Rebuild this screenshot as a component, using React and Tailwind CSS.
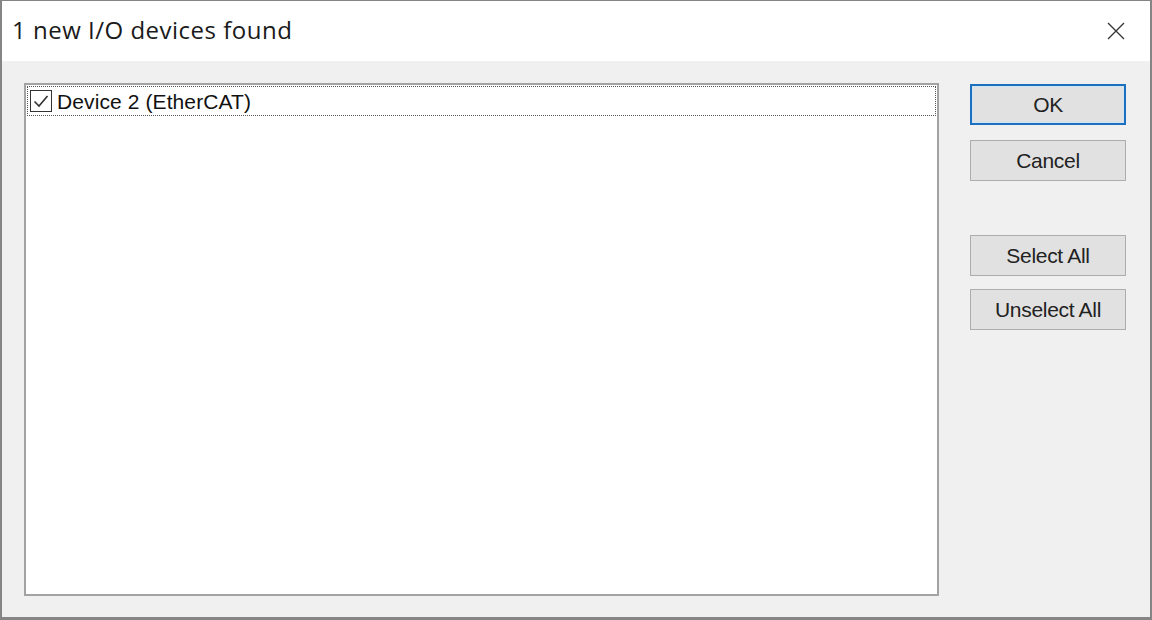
import React, { useState } from 'react';

const buttonBase =
    'h-[41px] w-full flex items-center justify-center bg-[#e1e1e1] text-[21px] text-[#222] font-["Liberation_Sans",Arial,sans-serif] tracking-[-0.3px]';

function DialogButton({ children, isDefault }) {
    return (
        <button
            type="button"
            className={
                isDefault
                    ? `${buttonBase} border-2 border-[#1f6fbf] shadow-[inset_0_0_0_1px_#cde6f7]`
                    : `${buttonBase} border border-[#adadad]`
            }
        >
            {children}
        </button>
    );
}

export default function App() {
    const [checked, setChecked] = useState(true);

    return (
        <div className="w-[1152px] h-[620px] flex flex-col bg-[#f0f0f0] border-t border-x-2 border-b-[3px] border-[#858585] overflow-hidden">
            {/* TITLE BAR */}
            <div className="h-[60px] shrink-0 bg-white flex items-center justify-between pl-[10px] pr-[22px]">
                <h1 className="text-[24px] text-[#1a1a1a] font-['Open_Sans',sans-serif] tracking-[0.5px] leading-none pb-[2px]">
                    1 new I/O devices found
                </h1>
                <button type="button" className="w-[24px] h-[24px] flex items-center justify-center text-[#333]">
                    <svg width="18" height="18" viewBox="0 0 18 18" fill="none" stroke="currentColor" strokeWidth="1.3">
                        <path d="M1 1L17 17M17 1L1 17" />
                    </svg>
                </button>
            </div>

            {/* BODY */}
            <div className="flex-1 flex gap-[31px] pl-[22px] pr-[23px] pt-[22px] pb-[20px]">
                {/* LIST */}
                <div className="w-[915px] h-[513px] bg-white border-2 border-[#a3a3a3] pt-[1px] pl-[1px] pr-[1px]">
                    <div
                        className="h-[30px] flex items-center border border-dotted border-[#555] pl-[2px]"
                        onClick={() => setChecked(!checked)}
                    >
                        <div className="w-[22px] h-[22px] border border-[#333] bg-white flex items-center justify-center shrink-0">
                            {checked && (
                                <svg width="18" height="18" viewBox="0 0 18 18" fill="none" stroke="#333" strokeWidth="1.6">
                                    <path d="M2.5 9.5L7 14L15.5 4" />
                                </svg>
                            )}
                        </div>
                        <span className="ml-[5px] text-[21px] leading-none text-[#111] font-['Liberation_Sans',Arial,sans-serif] tracking-[0.1px]">
                            Device 2 (EtherCAT)
                        </span>
                    </div>
                </div>

                {/* BUTTONS */}
                <div className="w-[156px] flex flex-col pt-[1px]">
                    <DialogButton isDefault>OK</DialogButton>
                    <div className="mt-[15px]">
                        <DialogButton>Cancel</DialogButton>
                    </div>
                    <div className="mt-[54px]">
                        <DialogButton>Select All</DialogButton>
                    </div>
                    <div className="mt-[13px]">
                        <DialogButton>Unselect All</DialogButton>
                    </div>
                </div>
            </div>
        </div>
    );
}
